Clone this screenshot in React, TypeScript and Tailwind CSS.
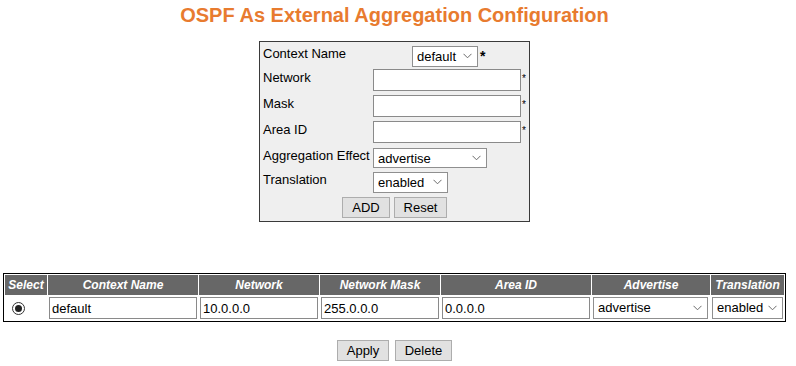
import React from 'react';

function Chevron() {
  return (
    <svg
      width="9"
      height="6"
      viewBox="0 0 9 6"
      className="pointer-events-none absolute right-[6px] top-1/2 -translate-y-1/2"
    >
      <path d="M0.5 0.8 L4.5 4.8 L8.5 0.8" fill="none" stroke="#6b6b6b" strokeWidth="1" />
    </svg>
  );
}

function Select({ value, options, className }: { value: string; options: string[]; className: string }) {
  return (
    <span className={`relative inline-block ${className}`}>
      <select
        defaultValue={value}
        className="h-full w-full appearance-none border border-[#8f8f8f] bg-white pl-[4px] text-[13px] text-black outline-none"
      >
        {options.map((o) => (
          <option key={o}>{o}</option>
        ))}
      </select>
      <Chevron />
    </span>
  );
}

function TextInput({ value = '', className }: { value?: string; className: string }) {
  return (
    <input
      type="text"
      defaultValue={value}
      className={`border border-[#8a8a8a] bg-white px-[2px] text-[13px] text-black outline-none ${className}`}
    />
  );
}

function Btn({ label, className }: { label: string; className: string }) {
  return (
    <button
      type="button"
      className={`h-[21px] border border-[#adadad] bg-[#e1e1e1] text-[13px] leading-[19px] text-black ${className}`}
    >
      {label}
    </button>
  );
}

const Star = () => <span className="ml-[1px] self-start pt-[5px] text-[10px] leading-none">*</span>;

export default function App() {
  const headers = [
    { label: 'Select', w: 'w-[42px]' },
    { label: 'Context Name', w: 'w-[150px]' },
    { label: 'Network', w: 'w-[120px]' },
    { label: 'Network Mask', w: 'w-[120px]' },
    { label: 'Area ID', w: 'w-[150px]' },
    { label: 'Advertise', w: 'w-[118px]' },
    { label: 'Translation', w: 'w-[73px]' },
  ];

  return (
    <div className="h-[366px] w-[796px] bg-white font-['Liberation_Sans',Arial,sans-serif] text-[13px] text-black">
      <div className="w-[789px]">
        <h1 className="pt-[3px] text-center text-[20px] font-bold leading-[24px] text-[#e87b2f]">
          OSPF As External Aggregation Configuration
        </h1>

        {/* add form */}
        <div className="mx-auto mt-[14px] w-[271px] border border-[#3a3a3a] bg-[#efefef] pb-[1px] pt-[2px]">
          <div className="flex h-[24px] items-center">
            <div className="mb-[5px] w-[113px] pl-[3px]">Context Name</div>
            <div className="flex flex-1 items-center pl-[39px]">
              <Select value="default" options={['default']} className="h-[21px] w-[66px]" />
              <span className="ml-[2px] self-start pt-[3px] text-[14px] font-bold leading-none">*</span>
            </div>
          </div>
          <div className="flex h-[24px] items-center">
            <div className="mb-[4px] w-[113px] pl-[3px]">Network</div>
            <div className="flex flex-1 items-center">
              <TextInput className="h-[22px] w-[148px]" />
              <Star />
            </div>
          </div>
          <div className="flex h-[27px] items-center">
            <div className="mb-[4px] w-[113px] pl-[3px]">Mask</div>
            <div className="flex flex-1 items-center">
              <TextInput className="h-[22px] w-[148px]" />
              <Star />
            </div>
          </div>
          <div className="flex h-[26px] items-center">
            <div className="mb-[4px] w-[113px] pl-[3px]">Area ID</div>
            <div className="flex flex-1 items-center">
              <TextInput className="h-[22px] w-[148px]" />
              <Star />
            </div>
          </div>
          <div className="flex h-[25px] items-center">
            <div className="mb-[4px] w-[113px] pl-[3px]">Aggregation Effect</div>
            <div className="flex flex-1 items-center">
              <Select value="advertise" options={['advertise', 'not-advertise']} className="h-[20px] w-[114px]" />
            </div>
          </div>
          <div className="flex h-[24px] items-center">
            <div className="mb-[4px] w-[113px] pl-[3px]">Translation</div>
            <div className="flex flex-1 items-center">
              <Select value="enabled" options={['enabled', 'disabled']} className="h-[21px] w-[75px]" />
            </div>
          </div>
          <div className="flex h-[26px] items-center justify-center gap-[4px]">
            <Btn label="ADD" className="w-[48px]" />
            <Btn label="Reset" className="w-[53px]" />
          </div>
        </div>

        {/* entries */}
        <table className="ml-[3px] mt-[51px] w-[783px] border-separate border-spacing-[1px] border border-black">
          <thead>
            <tr>
              {headers.map((h) => (
                <th
                  key={h.label}
                  className={`h-[20px] bg-[#676767] p-0 text-center text-[12px] font-bold italic text-white ${h.w}`}
                >
                  {h.label}
                </th>
              ))}
            </tr>
          </thead>
          <tbody>
            <tr>
              <td className="h-[24px] p-0 pl-[7px]">
                <span className="flex h-[13px] w-[13px] items-center justify-center rounded-full border border-[#333] bg-white">
                  <span className="h-[7px] w-[7px] rounded-full bg-[#222]" />
                </span>
              </td>
              <td className="p-0 pl-[1px]">
                <TextInput value="default" className="h-[22px] w-[148px]" />
              </td>
              <td className="p-0 pl-[1px]">
                <TextInput value="10.0.0.0" className="h-[22px] w-[118px]" />
              </td>
              <td className="p-0 pl-[1px]">
                <TextInput value="255.0.0.0" className="h-[22px] w-[118px]" />
              </td>
              <td className="p-0 pl-[1px]">
                <TextInput value="0.0.0.0" className="h-[22px] w-[148px]" />
              </td>
              <td className="p-0 pl-[1px]">
                <Select value="advertise" options={['advertise', 'not-advertise']} className="h-[22px] w-[115px]" />
              </td>
              <td className="p-0 pl-[1px]">
                <Select value="enabled" options={['enabled', 'disabled']} className="h-[22px] w-[71px]" />
              </td>
            </tr>
          </tbody>
        </table>

        <div className="mt-[18px] flex justify-center gap-[6px]">
          <Btn label="Apply" className="w-[52px]" />
          <Btn label="Delete" className="w-[57px]" />
        </div>
      </div>
    </div>
  );
}
